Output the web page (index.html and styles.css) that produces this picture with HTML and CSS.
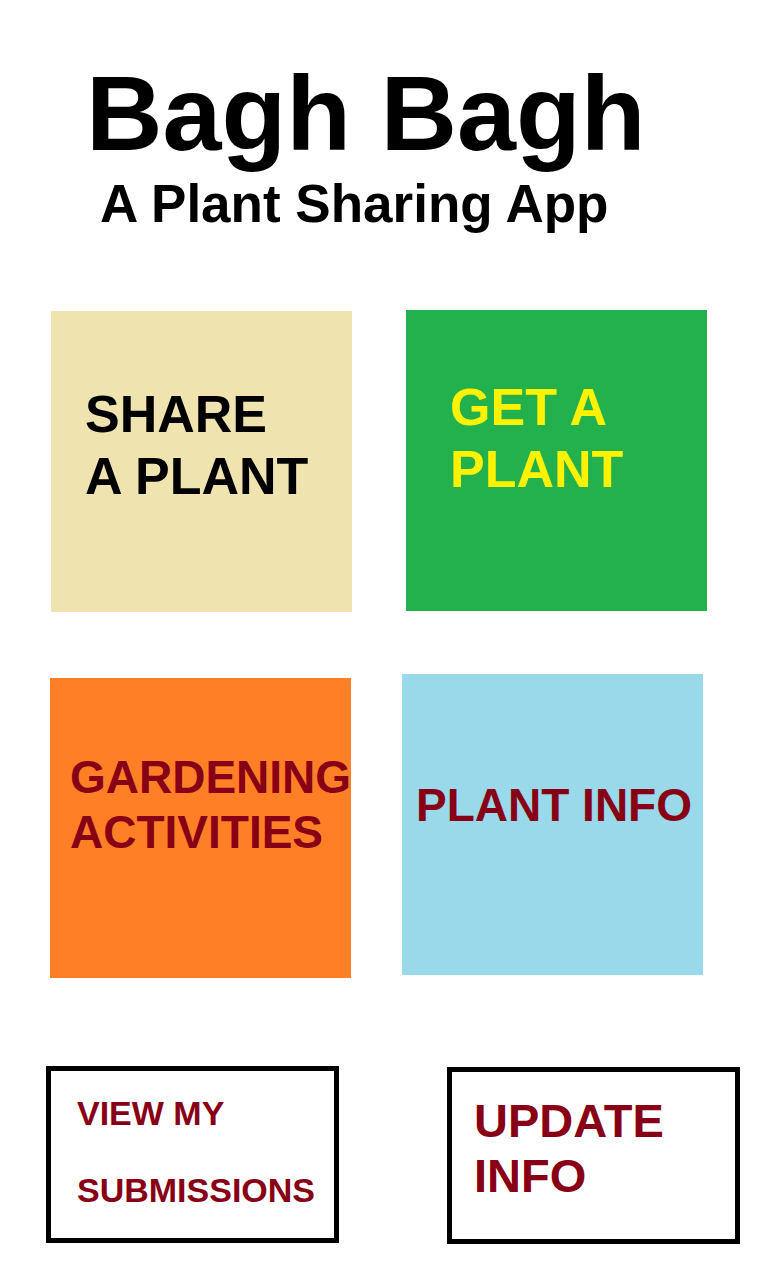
FILE: index.html
```html
<!DOCTYPE html>
<html lang="en">
<head>
<meta charset="utf-8">
<title>Bagh Bagh</title>
<link rel="stylesheet" href="styles.css">
</head>
<body>
<main class="page">
  <header class="header">
    <h1 class="title">Bagh Bagh</h1>
    <p class="subtitle">A Plant Sharing App</p>
  </header>

  <section class="row row-1">
    <a class="tile tile-share">SHARE<br>A PLANT</a>
    <a class="tile tile-get">GET A<br>PLANT</a>
  </section>

  <section class="row row-2">
    <a class="tile tile-garden">GARDENING<br>ACTIVITIES</a>
    <a class="tile tile-info">PLANT INFO</a>
  </section>

  <section class="row row-3">
    <a class="box box-subs">VIEW MY<br>SUBMISSIONS</a>
    <a class="box box-update">UPDATE<br>INFO</a>
  </section>
</main>
</body>
</html>
```

FILE: styles.css
```css
* {
  box-sizing: border-box;
}

html, body {
  margin: 0;
  padding: 0;
  background: #ffffff;
}

body {
  font-family: "Liberation Sans", Arial, sans-serif;
  font-weight: 700;
  color: #000000;
  width: 768px;
  height: 1280px;
  overflow: hidden;
}

.page {
  display: flex;
  flex-direction: column;
}

.header {
  display: flex;
  flex-direction: column;
}

.title {
  margin: 60px 0 0 86px;
  font-size: 106px;
  line-height: 106px;
  font-weight: 700;
}

.subtitle {
  margin: 8px 0 0 100px;
  font-size: 53px;
  line-height: 60px;
}

.row {
  display: flex;
  align-items: flex-start;
}

.row-1 {
  margin-top: 76px;
  padding-left: 51px;
  gap: 54px;
}

.row-2 {
  margin-top: 62px;
  padding-left: 50px;
  gap: 51px;
}

.row-3 {
  margin-top: 88px;
  padding-left: 46px;
  gap: 108px;
}

.tile {
  display: block;
  width: 301px;
  height: 301px;
  white-space: nowrap;
  overflow: hidden;
  text-decoration: none;
}

.tile-share {
  margin-top: 1px;
  background: #efe4b0;
  color: #000000;
  font-size: 52px;
  line-height: 62px;
  padding: 72px 0 0 34px;
}

.tile-get {
  background: #22b14c;
  color: #fff200;
  font-size: 52px;
  line-height: 62px;
  padding: 66px 0 0 44px;
}

.tile-garden {
  margin-top: 4px;
  height: 300px;
  background: #ff7f27;
  color: #880015;
  font-size: 46px;
  line-height: 55px;
  padding: 72px 0 0 20px;
}

.tile-info {
  background: #99d9ea;
  color: #880015;
  font-size: 46px;
  line-height: 55px;
  padding: 104px 0 0 14px;
}

.box {
  display: block;
  width: 293px;
  height: 177px;
  border: 5px solid #000000;
  background: #ffffff;
  color: #880015;
  white-space: nowrap;
  text-decoration: none;
}

.box-subs {
  font-size: 34px;
  line-height: 77px;
  padding: 4px 0 0 26px;
}

.box-update {
  margin-top: 1px;
  font-size: 47px;
  line-height: 55px;
  padding: 21px 0 0 22px;
}
```
